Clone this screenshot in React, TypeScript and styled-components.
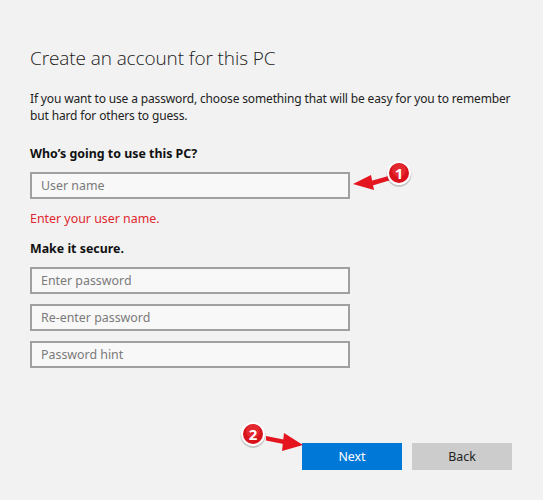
import React from "react";
import styled, { createGlobalStyle } from "styled-components";

const Global = createGlobalStyle`
  html, body { margin: 0; padding: 0; background: #f2f2f2; }
  body { font-family: "Noto Sans", "Open Sans", sans-serif; color: #000; }
`;

const Page = styled.div`
  width: 543px;
  height: 500px;
  box-sizing: border-box;
  padding: 41px 0 0 30px;
  display: flex;
  flex-direction: column;
  position: relative;
`;

const Title = styled.h1`
  margin: 0;
  font-family: "Open Sans", "Noto Sans", sans-serif;
  font-weight: 300;
  font-size: 19px;
  line-height: 34px;
  color: #1a1a1a;
  letter-spacing: -0.1px;
`;

const Description = styled.p`
  margin: 16px 0 0;
  font-size: 12px;
  letter-spacing: -0.15px;
  line-height: 16.5px;
  color: #222;
  width: 500px;
`;

const Label = styled.div<{ $top: number }>`
  margin-top: ${(p) => p.$top}px;
  font-size: 12.4px;
  font-weight: 700;
  line-height: 17px;
  color: #111;
`;

const FieldWrap = styled.div`
  position: relative;
  width: 320px;
  margin-top: 10px;
`;

const Input = styled.input`
  display: block;
  box-sizing: border-box;
  width: 320px;
  height: 27px;
  margin: 0;
  padding: 0 9px;
  border: 2px solid #a0a0a0;
  background: #f8f8f8;
  font-family: "Noto Sans", "Open Sans", sans-serif;
  font-size: 12.4px;
  color: #000;
  outline: none;
  &::placeholder { color: #7a7a7a; }
`;

const ErrorText = styled.div`
  margin-top: 11px;
  font-size: 12.4px;
  line-height: 17px;
  color: #e0272e;
`;

const Fields = styled.div`
  margin-top: 10px;
  display: flex;
  flex-direction: column;
  gap: 10px;
`;

const Footer = styled.div`
  margin-top: 75px;
  display: flex;
  justify-content: flex-end;
  gap: 10px;
  padding-right: 31px;
  position: relative;
`;

const Button = styled.button<{ $primary?: boolean }>`
  width: 100px;
  height: 27px;
  border: none;
  margin: 0;
  padding: 0;
  background: ${(p) => (p.$primary ? "#0078d7" : "#cccccc")};
  color: ${(p) => (p.$primary ? "#ffffff" : "#222")};
  font-family: "Noto Sans", "Open Sans", sans-serif;
  font-size: 12.4px;
`;

const Callout = styled.div`
  position: absolute;
  pointer-events: none;
`;

const Badge = ({ n }: { n: number }) => (
  <g>
    <circle cx="0" cy="1.5" r="12.5" fill="rgba(0,0,0,0.18)" />
    <circle cx="0" cy="0" r="12" fill="#ffffff" />
    <circle cx="0" cy="0" r="10" fill="#d8121b" />
    <circle cx="0" cy="-3" r="7" fill="#ee3a3f" opacity="0.55" />
    <text
      x="0"
      y="5.5"
      textAnchor="middle"
      fontFamily="'Noto Sans', sans-serif"
      fontWeight="700"
      fontSize="15"
      fill="#ffffff"
    >
      {n}
    </text>
  </g>
);

export default function App() {
  return (
    <>
      <Global />
      <Page>
        <Title>Create an account for this PC</Title>
        <Description>
          If you want to use a password, choose something that will be easy for you to remember but hard for others to guess.
        </Description>
        <Label $top={21}>Who’s going to use this PC?</Label>
        <FieldWrap>
          <Input placeholder="User name" />
          <Callout style={{ left: 320, top: -16, width: 80, height: 40 }}>
            <svg width="80" height="40" viewBox="0 0 80 40">
              <path d="M19 25.5 L42 19 L44 23 L21 30 Z" fill="#e4151e" />
              <path d="M3 28 L21 19 L24 34 Z" fill="#e4151e" />
              <g transform="translate(49,17)">
                <Badge n={1} />
              </g>
            </svg>
          </Callout>
        </FieldWrap>
        <ErrorText>Enter your user name.</ErrorText>
        <Label $top={13}>Make it secure.</Label>
        <Fields>
          <Input placeholder="Enter password" />
          <Input placeholder="Re-enter password" />
          <Input placeholder="Password hint" />
        </Fields>
        <Footer>
          <Callout style={{ left: 210, top: -21, width: 70, height: 40 }}>
            <svg width="70" height="40" viewBox="0 0 70 40">
              <path d="M26 14 L46 18 L46 22.5 L26 18.5 Z" fill="#e4151e" />
              <path d="M44 11 L63 23 L42 29 Z" fill="#e4151e" />
              <g transform="translate(13,12)">
                <Badge n={2} />
              </g>
            </svg>
          </Callout>
          <Button $primary>Next</Button>
          <Button>Back</Button>
        </Footer>
      </Page>
    </>
  );
}
